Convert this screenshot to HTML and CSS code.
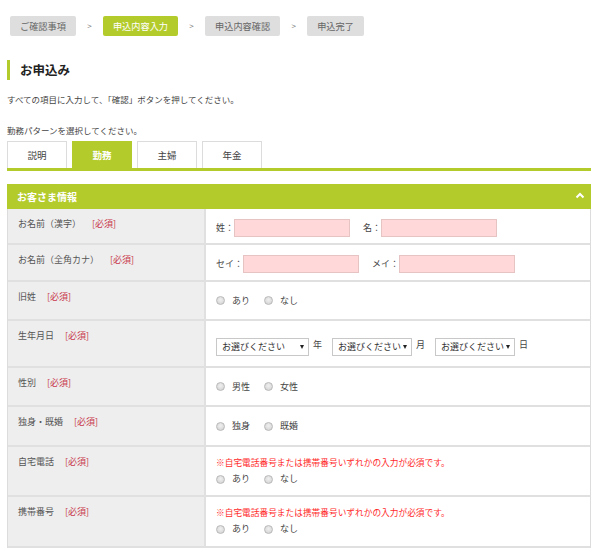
FILE: index.html
```html
<!DOCTYPE html>
<html lang="ja">
<head>
<meta charset="utf-8">
<title>お申込み</title>
<link rel="stylesheet" href="styles.css">
</head>
<body>
<div class="page">
  <ol class="steps">
    <li class="step">ご確認事項</li>
    <li class="sep">&gt;</li>
    <li class="step step-active">申込内容入力</li>
    <li class="sep">&gt;</li>
    <li class="step">申込内容確認</li>
    <li class="sep">&gt;</li>
    <li class="step">申込完了</li>
  </ol>

  <h1 class="title">お申込み</h1>
  <p class="intro">すべての項目に入力して、「確認」ボタンを押してください。</p>
  <p class="prompt">勤務パターンを選択してください。</p>

  <div class="tabs">
    <div class="tab">説明</div>
    <div class="tab tab-active">勤務</div>
    <div class="tab">主婦</div>
    <div class="tab">年金</div>
  </div>
  <div class="tab-line"></div>

  <section class="panel">
    <div class="panel-head">
      <span>お客さま情報</span>
      <svg class="chev" width="10" height="7" viewBox="0 0 10 7"><polyline points="1.5,5.5 5,2 8.5,5.5" fill="none" stroke="#fff" stroke-width="2"/></svg>
    </div>
    <div class="form">
      <div class="row h36">
        <div class="label">お名前（漢字）<span class="req">[必須]</span></div>
        <div class="value">
          <span class="field-label">姓：</span><span class="input"></span>
          <span class="field-label gap">名：</span><span class="input"></span>
        </div>
      </div>
      <div class="row h37">
        <div class="label">お名前（全角カナ）<span class="req">[必須]</span></div>
        <div class="value">
          <span class="field-label">セイ：</span><span class="input"></span>
          <span class="field-label gap">メイ：</span><span class="input"></span>
        </div>
      </div>
      <div class="row h39">
        <div class="label">旧姓<span class="req">[必須]</span></div>
        <div class="value value-center">
          <span class="radio"></span><span class="opt">あり</span>
          <span class="radio"></span><span class="opt">なし</span>
        </div>
      </div>
      <div class="row h47">
        <div class="label">生年月日<span class="req">[必須]</span></div>
        <div class="value value-select">
          <span class="select select-wide">お選びください<span class="arrow"></span></span><span class="unit">年</span>
          <span class="select">お選びください<span class="arrow"></span></span><span class="unit">月</span>
          <span class="select">お選びください<span class="arrow"></span></span><span class="unit">日</span>
        </div>
      </div>
      <div class="row h39">
        <div class="label">性別<span class="req">[必須]</span></div>
        <div class="value value-center">
          <span class="radio"></span><span class="opt">男性</span>
          <span class="radio"></span><span class="opt">女性</span>
        </div>
      </div>
      <div class="row h40">
        <div class="label">独身・既婚<span class="req">[必須]</span></div>
        <div class="value value-center">
          <span class="radio"></span><span class="opt">独身</span>
          <span class="radio"></span><span class="opt">既婚</span>
        </div>
      </div>
      <div class="row h50">
        <div class="label">自宅電話<span class="req">[必須]</span></div>
        <div class="value value-stack">
          <p class="note">※自宅電話番号または携帯番号いずれかの入力が必須です。</p>
          <div class="radios">
            <span class="radio"></span><span class="opt">あり</span>
            <span class="radio"></span><span class="opt">なし</span>
          </div>
        </div>
      </div>
      <div class="row h51">
        <div class="label">携帯番号<span class="req">[必須]</span></div>
        <div class="value value-stack">
          <p class="note">※自宅電話番号または携帯番号いずれかの入力が必須です。</p>
          <div class="radios">
            <span class="radio"></span><span class="opt">あり</span>
            <span class="radio"></span><span class="opt">なし</span>
          </div>
        </div>
      </div>
    </div>
  </section>
</div>
</body>
</html>
```

FILE: styles.css
```css
* { box-sizing: border-box; }
html, body { margin: 0; padding: 0; background: #fff; }
body {
  font-family: "Noto Sans CJK JP", "Noto Sans", sans-serif;
  font-size: 9px;
  color: #444;
}
.page { padding: 16px 9px 0 7px; width: 600px; }

/* steps */
.steps {
  list-style: none; margin: 0; padding: 0 0 0 3px;
  display: flex; align-items: center; height: 20px;
}
.step {
  height: 20px; line-height: 20px; padding: 0 10px;
  background: #dedede; color: #666; border-radius: 2px;
  font-size: 9.2px; white-space: nowrap;
}
.step-active { background: #b4cb2c; color: #fff; }
.sep { width: 27px; text-align: center; color: #777; font-size: 8px; line-height: 20px; }

/* heading */
.title {
  margin: 24px 0 0; height: 20px; line-height: 20px;
  border-left: 3px solid #b4cb2c; padding-left: 10px;
  font-size: 12.5px; font-weight: bold; color: #222;
}
.intro { margin: 13px 0 0; line-height: 12px; font-size: 8.5px; color: #444; }
.prompt { margin: 19px 0 0; line-height: 12px; font-size: 8.5px; color: #444; }

/* tabs */
.tabs { display: flex; gap: 5px; margin-top: 5px; }
.tab {
  width: 60px; height: 27px; line-height: 26px; text-align: center;
  border: 1px solid #dcdcdc; border-bottom: none; background: #fff;
  font-size: 9.5px; color: #444;
}
.tab-active { background: #b4cb2c; border-color: #b4cb2c; color: #fff; font-weight: bold; }
.tab-line { height: 3px; background: #b4cb2c; }

/* panel */
.panel { margin-top: 13px; }
.panel-head {
  height: 25px; background: #b4cb2c; color: #fff;
  display: flex; align-items: center; justify-content: space-between;
  padding: 0 6px 0 10px; font-size: 10px; font-weight: bold;
}
.chev { display: block; margin-top: -2px; }

.form { border-left: 1px solid #dcdcdc; border-right: 1px solid #dcdcdc; }
.row {
  display: grid; grid-template-columns: 198px 1fr;
  border-bottom: 2px solid #e0e0e0;
}
.h36 { height: 36px; }
.h37 { height: 37px; }
.h39 { height: 39px; }
.h40 { height: 40px; }
.h47 { height: 47px; }
.h50 { height: 50px; }
.h51 { height: 51px; }

.label {
  background: #eeeeee; color: #555; padding: 9px 0 0 10px;
  line-height: 12px; font-size: 9px;
  border-right: 2px solid #e0e0e0;
}
.req { color: #c8364a; margin-left: 11px; }

.value { padding: 10px 0 0 10px; display: flex; align-items: flex-start; color: #444; }
.value-center { padding-top: 0; align-items: center; }
.value-select { padding-top: 17px; }
.value-stack { flex-direction: column; padding-top: 9px; }

.field-label { line-height: 18px; white-space: nowrap; }
.field-label.gap { margin-left: 13px; }
.input {
  width: 116px; height: 18px; background: #ffd9d9;
  border: 1px solid #e6c4c4;
}

.radio {
  width: 9px; height: 9px; border-radius: 50%;
  border: 1px solid #b9b9b9;
  background: radial-gradient(circle at 50% 40%, #f0f0f0, #cfcfcf);
  flex: none;
}
.opt { margin: 0 14px 0 7px; line-height: 14px; }

.select {
  position: relative;
  width: 80px; height: 18px; line-height: 16px; border: 1px solid #c8c8c8;
  background: #fff; padding-left: 5px; color: #333; white-space: nowrap;
}
.select-wide { width: 93px; }
.arrow {
  position: absolute; right: 4px; top: 6px;
  width: 0; height: 0;
  border-left: 2.5px solid transparent; border-right: 2.5px solid transparent;
  border-top: 4px solid #222;
}
.unit { margin: 0 10px 0 4px; line-height: 14px; }

.note { margin: 0; line-height: 14px; color: #ff2a2a; font-size: 8.7px; }
.radios { display: flex; align-items: center; margin-top: 1px; height: 16px; }
```
